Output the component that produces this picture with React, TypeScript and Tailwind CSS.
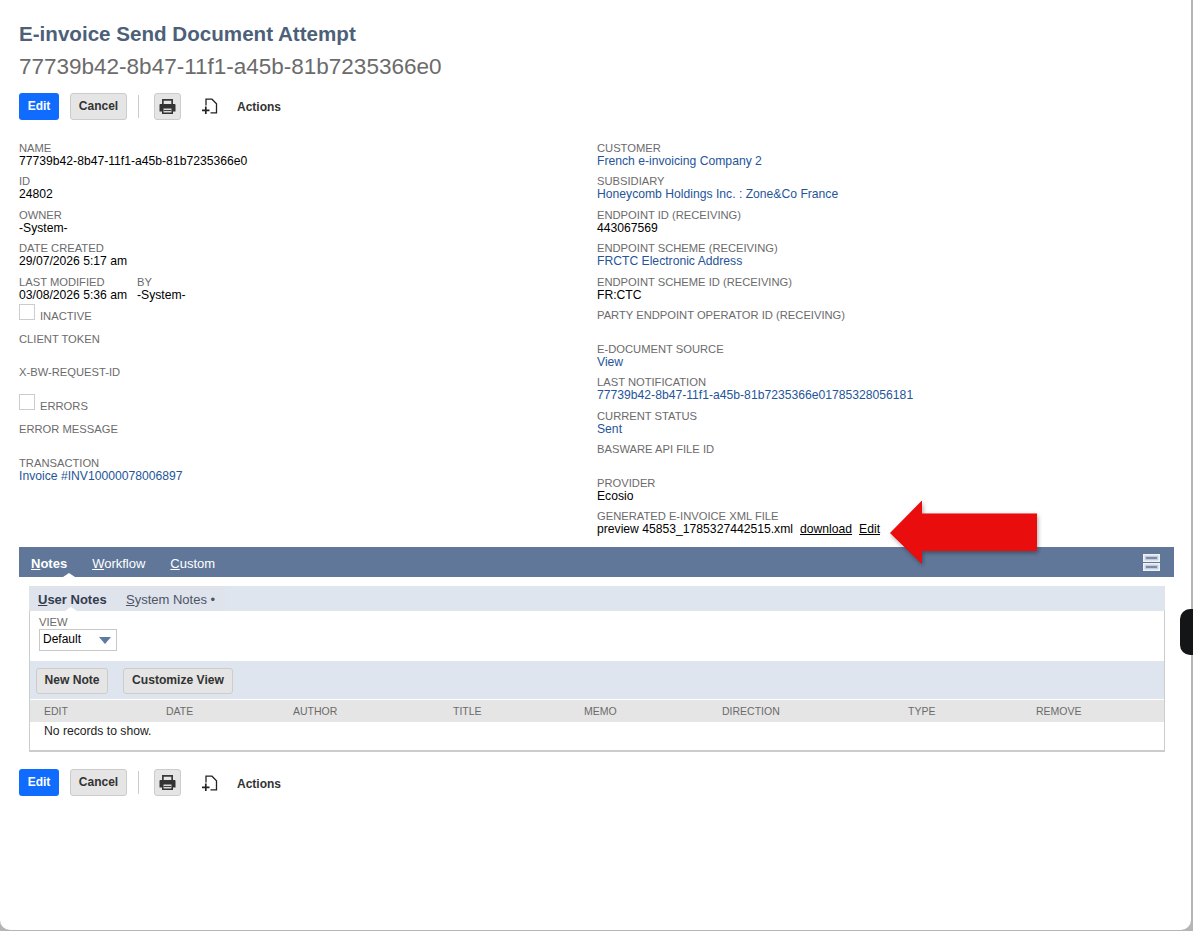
const font = "[font-family:'Liberation_Sans',Arial,sans-serif]";

function PrintIcon() {
  return (
    <svg width="17" height="17" viewBox="0 0 17 17">
      <path d="M3 6.500V1h11v5.500h-1.700V2.700H4.700v3.800z" fill="#3a3a3a" />
      <path d="M0.500 7c0-.6.500-1 1-1h14c.5 0 1 .400 1 1v6.500h-2.500V16H3v-2.500H0.500z" fill="#333333" />
      <path d="M4.500 10.500h8v4h-8z" fill="#d8d8d8" />
      <path d="M4.500 12h8v1h-8z" fill="#444444" />
    </svg>
  );
}

function AddIcon() {
  return (
    <svg width="16" height="17" viewBox="0 0 16 17" fill="none" stroke="#222" strokeWidth="1.300">
      <path d="M4 7.500V1.200h6l4.500 4.500v9.200H8.500" />
      <path d="M0 12.300h7.500M3.800 8.600v7.400" strokeWidth="1.700" />
    </svg>
  );
}

function Toolbar({ low }: { low?: boolean }) {
  return (
    <div className="flex items-center h-[27px]">
      <button className="w-10 h-[27px] pb-[2px] rounded-[3px] bg-[#0f6cff] text-white text-[12px] font-bold">Edit</button>
      <button className="ml-[11px] w-[57px] h-[27px] pb-[2px] rounded-[3px] bg-[#e5e5e5] border border-[#cccccc] text-[#333333] text-[12px] font-bold">Cancel</button>
      <div className="ml-[11px] w-px h-[23px] bg-[#cccccc]" />
      <button className="ml-[15px] w-[27px] h-[27px] rounded-[3px] bg-[#e5e5e5] border border-[#cccccc] flex items-center justify-center">
        <PrintIcon />
      </button>
      <span className={`ml-[21px] flex items-center ${low ? "mt-[2px]" : ""}`}><AddIcon /></span>
      <span className={`ml-[19px] text-[12px] font-bold text-[#333333] ${low ? "mt-[2px]" : ""}`}>Actions</span>
    </div>
  );
}

function Field({ label, value, link, by }: { label: string; value?: string; link?: boolean; by?: [string, string] }) {
  return (
    <div className="h-[33.5px] leading-[13px]">
      {by ? (
        <div className="flex">
          <div className="w-[118px]">
            <div className="text-[11.2px] text-[#6b6b6b]">{label}</div>
            <div className="text-[12.16px] text-black">{value}</div>
          </div>
          <div>
            <div className="text-[11.2px] text-[#6b6b6b]">{by[0]}</div>
            <div className="text-[12.16px] text-black">{by[1]}</div>
          </div>
        </div>
      ) : (
        <>
          <div className="text-[11.2px] text-[#6b6b6b]">{label}</div>
          {value && <div className={`text-[12.16px] ${link ? "text-[#255599]" : "text-black"}`}>{value}</div>}
        </>
      )}
    </div>
  );
}

function Check({ label }: { label: string }) {
  return (
    <div className="h-[29px] flex items-start text-[11.2px] leading-[13px] text-[#6b6b6b]">
      <span className="w-4 h-4 border border-[#cccccc] bg-white shrink-0" />
      <span className="ml-[5px] mt-[6px]">{label}</span>
    </div>
  );
}

const columns = [
  ["EDIT", "w-[122px]"],
  ["DATE", "w-[127px]"],
  ["AUTHOR", "w-[160px]"],
  ["TITLE", "w-[131px]"],
  ["MEMO", "w-[138px]"],
  ["DIRECTION", "w-[186px]"],
  ["TYPE", "w-[128px]"],
  ["REMOVE", "w-[110px]"],
];

export default function App() {
  return (
    <div className={`${font} relative w-[1193px] h-[931px] overflow-hidden bg-[#b5b5b5]`}>
      <div className="h-[930px] w-[1191px] rounded-bl-[10px] rounded-br-[10px] bg-white pl-[19px] pt-[20px]">
        <h1 className="text-[20.6px] leading-[27px] font-bold text-[#4d5f79]">E-invoice Send Document Attempt</h1>
        <h2 className="mt-[6px] text-[22.5px] leading-[27px] text-[#6b6b6b]">77739b42-8b47-11f1-a45b-81b7235366e0</h2>

        <div className="mt-[13px]">
          <Toolbar />
        </div>

        {/* Primary fields */}
        <div className="mt-[21.75px] flex h-[405.25px]">
          <div className="w-[578px]">
            <Field label="NAME" value="77739b42-8b47-11f1-a45b-81b7235366e0" />
            <Field label="ID" value="24802" />
            <Field label="OWNER" value="-System-" />
            <Field label="DATE CREATED" value="29/07/2026 5:17 am" />
            <Field label="LAST MODIFIED" value="03/08/2026 5:36 am" by={["BY", "-System-"]} />
            <div className="-mt-[5.5px]">
              <Check label="INACTIVE" />
            </div>
            <Field label="CLIENT TOKEN" />
            <Field label="X-BW-REQUEST-ID" />
            <div className="-mt-[5.5px]">
              <Check label="ERRORS" />
            </div>
            <Field label="ERROR MESSAGE" />
            <Field label="TRANSACTION" value="Invoice #INV10000078006897" link />
          </div>
          <div>
            <Field label="CUSTOMER" value="French e-invoicing Company 2" link />
            <Field label="SUBSIDIARY" value="Honeycomb Holdings Inc. : Zone&Co France" link />
            <Field label="ENDPOINT ID (RECEIVING)" value="443067569" />
            <Field label="ENDPOINT SCHEME (RECEIVING)" value="FRCTC Electronic Address" link />
            <Field label="ENDPOINT SCHEME ID (RECEIVING)" value="FR:CTC" />
            <Field label="PARTY ENDPOINT OPERATOR ID (RECEIVING)" />
            <Field label="E-DOCUMENT SOURCE" value="View" link />
            <Field label="LAST NOTIFICATION" value="77739b42-8b47-11f1-a45b-81b7235366e01785328056181" link />
            <Field label="CURRENT STATUS" value="Sent" link />
            <Field label="BASWARE API FILE ID" />
            <Field label="PROVIDER" value="Ecosio" />
            <div className="leading-[13px]">
              <div className="text-[11.2px] text-[#6b6b6b]">GENERATED E-INVOICE XML FILE</div>
              <div className="text-[12.16px] text-black">
                preview 45853_1785327442515.xml
                <span className="ml-[7px] underline">download</span>
                <span className="ml-[7px] underline">Edit</span>
              </div>
            </div>
          </div>
        </div>

        {/* Tab bar */}
        <div className="h-[30px] w-[1155px] bg-[#607799] relative flex items-center pt-[3px] pl-[12px] gap-[25px] text-[13px] text-white">
          <span className="font-bold relative">
            <span className="underline">N</span>otes
          </span>
          <span><span className="underline">W</span>orkflow</span>
          <span><span className="underline">C</span>ustom</span>
          <svg className="absolute left-[1124px] top-[7px]" width="17" height="17" viewBox="0 0 17 17" fill="#c3cddc" stroke="#eef1f5" strokeWidth="1.600">
            <rect x="0.800" y="0.800" width="15.400" height="6.400" />
            <rect x="0.800" y="9.800" width="15.400" height="6.400" />
            <path d="M3 4h11M3 13h11" stroke="#607799" strokeWidth="1.500" />
          </svg>
          <span className="absolute left-[44px] bottom-0 w-0 h-0 border-x-[6px] border-x-transparent border-b-[4px] border-b-white" />
        </div>

        {/* Notes panel */}
        <div className="mt-[9px] ml-[10px] w-[1136px]">
          <div className="h-[25px] bg-[#dfe5ef] flex">
            <div className="relative w-[84px] pl-[9px] pt-px text-[13px] leading-[26px] font-bold text-[#333d4f] bg-[#dfe3ec]">
              <span className="underline">U</span>ser Notes
              <span className="absolute left-[36px] bottom-0 w-0 h-0 border-x-[6px] border-x-transparent border-b-[4px] border-b-white" />
            </div>
            <div className="w-[112px] pl-[13px] pt-px text-[13px] leading-[26px] text-[#4d5566] bg-[#dfe3ec]">
              <span className="underline">S</span>ystem Notes •
            </div>
          </div>
          <div className="border-x border-b-2 border-[#cccccc] h-[141px]">
            <div className="h-[50px] pl-[9px] pt-[5px] leading-[13px] text-[#6b6b6b]">
              <div className="text-[11.2px]">VIEW</div>
              <div className="w-[78px] h-[22px] border border-[#c8c8c8] flex items-center justify-between pl-[3px] pr-[5px] pb-[2px] text-[12px] text-black">
                Default
                <svg className="mt-[2px]" width="12" height="7" viewBox="0 0 12 7"><path d="M0 0h12L6 7z" fill="#5f7a9e" /></svg>
              </div>
            </div>
            <div className="h-[38px] bg-[#dfe5ef] flex items-start pt-[7px] pl-[6px] gap-[15px] text-[12.1px] font-bold text-[#333333]">
              <button className="w-[72px] h-[26px] pb-[2px] rounded-[3px] bg-[#e5e5e5] border border-[#cccccc]">New Note</button>
              <button className="w-[110px] h-[26px] pb-[2px] rounded-[3px] bg-[#e5e5e5] border border-[#cccccc]">Customize View</button>
            </div>
            <div className="mt-px h-[22px] pt-[2px] bg-[#e5e5e5] flex items-center pl-[14px] text-[10.5px] text-[#6b6b6b]">
              {columns.map(([name, width]) => (
                <span key={name} className={width}>{name}</span>
              ))}
            </div>
            <div className="pl-[14px] pt-[2px] text-[12.16px] leading-[14px] text-[#222222]">No records to show.</div>
          </div>
        </div>

        <div className="mt-[17px]">
          <Toolbar low />
        </div>
      </div>

      {/* Annotation arrow */}
      <svg className="absolute left-[885px] top-[495px]" width="165" height="80" viewBox="0 0 165 80">
        <defs>
          <filter id="shadow" x="-10%" y="-10%" width="125%" height="130%">
            <feDropShadow dx="1" dy="2" stdDeviation="2" floodColor="#000" floodOpacity="0.35" />
          </filter>
        </defs>
        <path d="M5 38 L37 5.500 V18.500 H152 V56 H37 V69 Z" fill="#ea0707" filter="url(#shadow)" />
      </svg>

      {/* Floating widget clipped by the edge */}
      <div className="absolute left-[1180px] top-[609px] w-[30px] h-[46px] rounded-[10px] bg-[#131517]" />
    </div>
  );
}
